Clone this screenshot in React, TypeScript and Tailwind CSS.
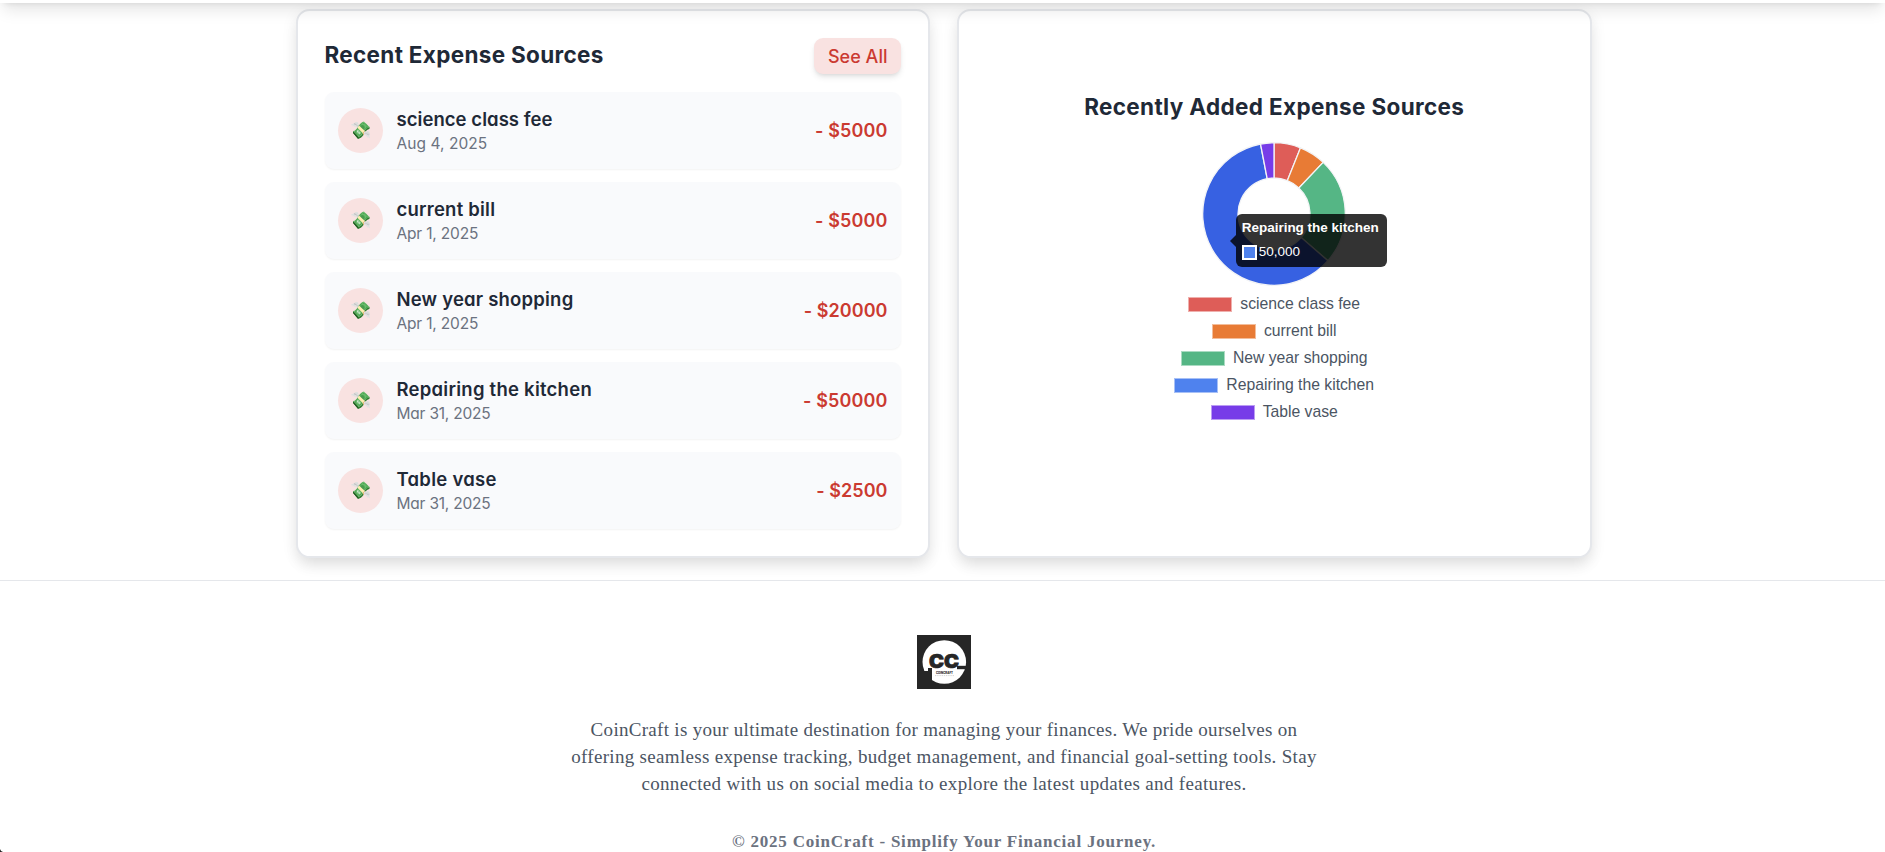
import { useLayoutEffect } from 'react';

const expenses = [
  { name: 'science class fee', nameClass: 'tracking-[0.05px]', date: 'Aug 4, 2025', dateClass: 'tracking-[0.05px]', amount: '5000', amountClass: 'tracking-[0.12px]' },
  { name: 'current bill', nameClass: 'tracking-[0.22px]', date: 'Apr 1, 2025', dateClass: 'tracking-[-0.17px]', amount: '5000', amountClass: 'tracking-[0.12px]' },
  { name: 'New year shopping', nameClass: 'tracking-[0.2px]', date: 'Apr 1, 2025', dateClass: 'tracking-[-0.17px]', amount: '20000', amountClass: 'tracking-[0.06px]' },
  { name: 'Repairing the kitchen', nameClass: 'tracking-[0.25px]', date: 'Mar 31, 2025', dateClass: 'tracking-[-0.2px]', amount: '50000', amountClass: 'tracking-[0.12px]' },
  { name: 'Table vase', nameClass: 'tracking-[0.28px]', date: 'Mar 31, 2025', dateClass: 'tracking-[-0.2px]', amount: '2500', amountClass: 'tracking-[0.05px]' },
];

const slices = [
  { label: 'science class fee', value: 5000, fill: '#de5d58', swatch: 'bg-[#de5d58] border-[#efb0ad]' },
  { label: 'current bill', value: 5000, fill: '#e87b35', swatch: 'bg-[#e87b35] border-[#f3bd9a]' },
  { label: 'New year shopping', value: 20000, fill: '#55b685', swatch: 'bg-[#55b685] border-[#aadbc2]' },
  { label: 'Repairing the kitchen', value: 50000, fill: '#3761e2', swatch: 'bg-[#4f82ee] border-[#a7c0f6]' },
  { label: 'Table vase', value: 2500, fill: '#773ce8', swatch: 'bg-[#773ce8] border-[#bb9df3]' },
];

const cardClass =
  'h-[549px] min-w-0 rounded-xl border-2 border-[#e5e7eb] bg-white shadow-[0_10px_15px_-3px_rgba(0,0,0,0.08),0_4px_16px_0_rgba(0,0,0,0.08)]';

function slicePath(start: number, end: number) {
  const c = 72;
  const R = 71.3;
  const r = 36;
  const at = (rad: number, a: number) =>
    `${(c + rad * Math.sin(a)).toFixed(2)} ${(c - rad * Math.cos(a)).toFixed(2)}`;
  const large = end - start > Math.PI ? 1 : 0;
  return `M${at(R, start)}A${R} ${R} 0 ${large} 1 ${at(R, end)}L${at(r, end)}A${r} ${r} 0 ${large} 0 ${at(r, start)}Z`;
}

function Donut() {
  const total = slices.reduce((sum, s) => sum + s.value, 0);
  let sum = 0;
  return (
    <svg width="144" height="144" viewBox="0 0 144 144">
      {slices.map((s) => {
        const start = (sum / total) * Math.PI * 2;
        sum += s.value;
        const end = (sum / total) * Math.PI * 2;
        return <path key={s.label} d={slicePath(start, end)} fill={s.fill} stroke="#f3f4f6" strokeWidth="1.3" />;
      })}
    </svg>
  );
}

function Tooltip() {
  return (
    <div className="absolute top-[72px] left-[34px] h-[53px] w-[151px] rounded-[6px] bg-black/80 pt-[6px] pl-[6px] text-white">
      <svg className="absolute top-[21px] left-[-6px]" width="6" height="12" viewBox="0 0 6 12">
        <path d="M6 0L0 6L6 12Z" fill="#000" fillOpacity="0.8" />
      </svg>
      <p className="text-[13.5px] leading-[16px] font-bold tracking-[-0.02px] whitespace-nowrap">Repairing the kitchen</p>
      <div className="mt-[8px] flex h-[16px] items-center gap-[2px]">
        <span className="size-[15px] border border-white bg-white p-px">
          <span className="block size-full bg-[#4f82ee]" />
        </span>
        <span className="text-[13.5px] leading-[16px]">50,000</span>
      </div>
    </div>
  );
}

function Logo() {
  return (
    <svg className="size-12" viewBox="0 0 54 54">
      <rect width="54" height="54" fill="#262626" />
      <circle cx="27.3" cy="27" r="21.8" fill="#fff" />
      <text x="12" y="33.2" fontFamily="Inter" fontWeight="900" fontSize="18.5" textLength="30" lengthAdjust="spacingAndGlyphs" fill="#262626" stroke="#262626" strokeWidth="0.7">CC</text>
      <path d="M40 30.8H54V34.2H40Z" fill="#262626" />
      <path d="M11 33H15V50H0V36H11Z" fill="#262626" />
      <text x="19" y="38.8" fontFamily="Inter" fontWeight="800" fontSize="3.2" textLength="17" lengthAdjust="spacingAndGlyphs" fill="#262626">COINCRAFT</text>
      <path d="M18 40.6H37" stroke="#c4c4c4" strokeWidth="0.7" strokeDasharray="1.4 0.8" />
    </svg>
  );
}

export default function App() {
  useLayoutEffect(() => {
    document.documentElement.classList.add('text-[18px]');
  }, []);

  return (
    <div className="relative flex h-[852px] w-full flex-col overflow-hidden bg-white font-['Inter',sans-serif] text-[#1f2937]">
      <header className="relative z-10 -mt-[80px] h-[83px] shrink-0 bg-white shadow-[0_10px_15px_-3px_rgba(0,0,0,0.1),0_4px_6px_-4px_rgba(0,0,0,0.1)]" />

      <main className="h-[577px] shrink-0 pt-[6px] pl-[2px]">
        <div className="mx-auto grid w-[1296px] grid-cols-2 gap-6">
          <section className={`${cardClass} p-6`}>
            <div className="mb-4 flex items-center justify-between">
              <h2 className="-mt-0.5 text-[22.5px] leading-[31.5px] font-bold tracking-[0.32px] [font-feature-settings:'cv11'_1]">Recent Expense Sources</h2>
              <button className="rounded-lg bg-[#f9e2e1] px-3 py-1 text-[18px] leading-[27px] font-medium tracking-[0.02px] text-[#cb3a31] shadow-md">
                See All
              </button>
            </div>
            <ul className="flex flex-col gap-3 [font-feature-settings:'cv11'_1]">
              {expenses.map((e) => (
                <li key={e.name} className="flex items-center justify-between rounded-lg bg-[#f9fafc] p-3 shadow-[0_1px_2px_0_rgba(0,0,0,0.05)]">
                  <div className="flex items-center gap-3">
                    <span className="flex size-10 items-center justify-center rounded-full bg-[#f9e2e1] text-[17px] leading-none">💸</span>
                    <div>
                      <p className={`text-[18.5px] leading-[27px] font-semibold ${e.nameClass}`}>{e.name}</p>
                      <p className={`text-[15.5px] leading-[22.5px] text-[#6b7280] ${e.dateClass}`}>{e.date}</p>
                    </div>
                  </div>
                  <p className={`text-[18px] leading-[27px] font-semibold text-[#cb3a31] ${e.amountClass}`}>- ${e.amount}</p>
                </li>
              ))}
            </ul>
          </section>

          <section className={`${cardClass} flex flex-col items-center pt-[80px]`}>
            <h2 className="text-[22.5px] leading-[32px] font-bold tracking-[0.35px] [font-feature-settings:'cv11'_1]">Recently Added Expense Sources</h2>
            <div className="relative mt-[19px] mr-[1px] h-[144px] w-[144px] font-['Liberation_Sans',sans-serif]">
              <Donut />
              <Tooltip />
            </div>
            <ul className="mt-[4px] flex flex-col items-center font-['Liberation_Sans',sans-serif]">
              {slices.map((s) => (
                <li key={s.label} className="flex h-6 items-center gap-[8px]">
                  <span className={`mt-[2px] h-[15px] w-[44px] border ${s.swatch}`} />
                  <span className="text-[15.75px] leading-[18px] tracking-[-0.01px] text-[#4b5563]">{s.label}</span>
                </li>
              ))}
            </ul>
          </section>
        </div>
      </main>

      <footer className="relative z-10 flex shrink-0 flex-col items-center border-t border-[#e5e7eb] pt-12 pl-[3px] font-['Georgia','Liberation_Serif',serif]">
        <Logo />
        <p className="mt-6 text-center text-[19px] leading-[27px] whitespace-nowrap text-[#4b5563]">
          <span className="block tracking-[0.3px]">CoinCraft is your ultimate destination for managing your finances. We pride ourselves on</span>
          <span className="block tracking-[0.31px]">offering seamless expense tracking, budget management, and financial goal-setting tools. Stay</span>
          <span className="block tracking-[0.33px]">connected with us on social media to explore the latest updates and features.</span>
        </p>
        <p className="mt-[35px] text-[17px] leading-[20px] font-bold tracking-[0.79px] whitespace-nowrap text-[#6b7280] [font-variant-numeric:oldstyle-nums]">
          © 2025 CoinCraft - Simplify Your Financial Journey.
        </p>
      </footer>

      <svg className="absolute bottom-0 left-0 z-20" width="3" height="3" viewBox="0 0 3 3">
        <path d="M0 0Q0.6 2.4 3 3H0Z" fill="#222" />
      </svg>
    </div>
  );
}
